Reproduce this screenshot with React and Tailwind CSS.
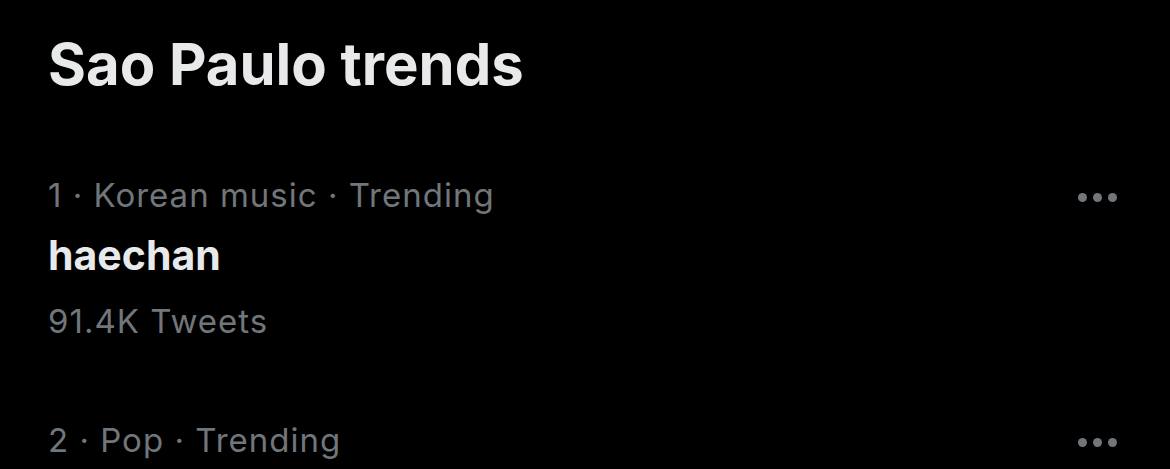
const trends = [
  { rank: 1, category: 'Korean music', name: 'haechan', count: '91.4K Tweets' },
  { rank: 2, category: 'Pop', name: null, count: null },
];

function Dots() {
  return (
    <div className="flex items-center gap-[6px] pt-[4px]">
      <span className="block h-[9px] w-[9px] rounded-full bg-[#71767b]" />
      <span className="block h-[9px] w-[9px] rounded-full bg-[#71767b]" />
      <span className="block h-[9px] w-[9px] rounded-full bg-[#71767b]" />
    </div>
  );
}

function TrendItem({ trend }) {
  return (
    <div className="pb-[53px]">
      <div className="flex items-center justify-between pr-[53px] text-[33px] leading-[60px] tracking-[1px] text-[#71767b]">
        <span>
          {trend.rank} · {trend.category} · Trending
        </span>
        <Dots />
      </div>
      {trend.name && (
        <div className="text-[41px] font-bold leading-[60px] text-[#e7e9ea]">{trend.name}</div>
      )}
      {trend.count && (
        <div className="text-[33px] leading-[72px] tracking-[1px] text-[#71767b]">{trend.count}</div>
      )}
    </div>
  );
}

export default function App() {
  return (
    <div
      className="h-[469px] w-[1170px] overflow-hidden bg-black pl-[48px] pt-[29px]"
      style={{ fontFamily: 'Inter, "Noto Sans", sans-serif' }}
    >
      <h1 className="text-[58px] font-bold leading-[70px] text-[#e7e9ea]">Sao Paulo trends</h1>
      <div className="pt-[66px]">
        {trends.map((t) => (
          <TrendItem key={t.rank} trend={t} />
        ))}
      </div>
    </div>
  );
}
